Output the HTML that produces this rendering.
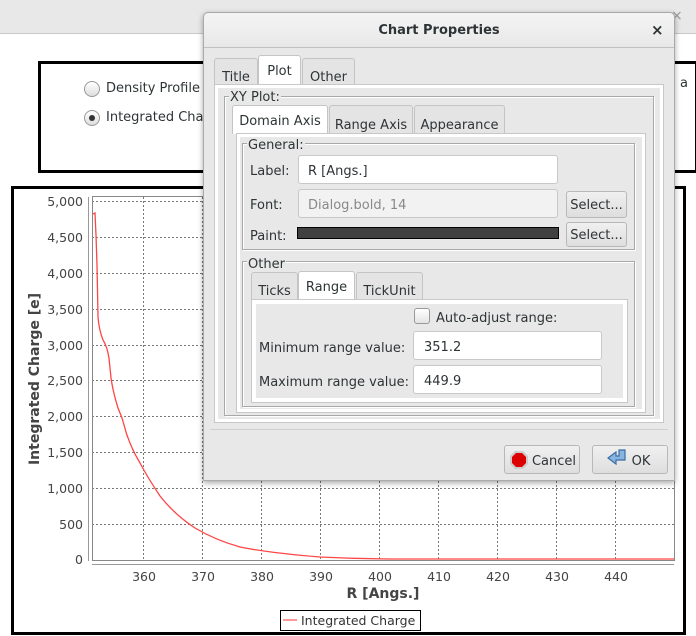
<!DOCTYPE html>
<html><head><meta charset="utf-8"><style>
*{box-sizing:border-box;margin:0;padding:0}
body{width:696px;height:636px;overflow:hidden;background:#fff;font-family:"DejaVu Sans","Liberation Sans",sans-serif;font-size:13px;color:#2e3436;position:relative}
.a{position:absolute}
.tab{position:absolute;border:1px solid #c4c4c4;border-bottom:none;border-radius:3px 3px 0 0;background:#e4e4e4;text-align:center;padding-top:11px;font-size:13px}
.tab.s{background:#fff;padding-top:8px}
.grp{position:absolute;border:1px solid #a8a8a8;box-shadow:inset 1px 1px 0 #fff,1px 1px 0 #fff}
.lg{position:absolute;background:#e8e8e8;padding:0 1px;font-size:13px;line-height:14px}
.fld{position:absolute;background:#fff;border:1px solid #c8c8c8;border-radius:3px;padding-left:9px;line-height:31px}
.btn{position:absolute;border:1px solid #b8b8b8;border-radius:3px;background:linear-gradient(#f0f0f0,#dedede);text-align:center;font-size:13px}
</style></head><body>
<div class="a" style="left:0;top:0;width:696px;height:34px;background:#e8e8e8;border-bottom:1px solid #c8c8c8"></div>
<div class="a" style="left:671px;top:8px;color:#999;font-size:14px">×</div>
<div class="a" style="left:38px;top:61px;width:660px;height:112px;border:3px solid #000"></div>
<div class="a" style="left:84px;top:81px;width:16px;height:16px;border:1px solid #999;border-radius:50%;background:linear-gradient(#fff,#ddd)"></div>
<div class="a" style="left:106px;top:81px">Density Profile</div>
<div class="a" style="left:84px;top:110px;width:16px;height:16px;border:1px solid #999;border-radius:50%;background:linear-gradient(#fff,#ddd)"><div class="a" style="left:4px;top:4px;width:6px;height:6px;border-radius:50%;background:#333"></div></div>
<div class="a" style="left:106px;top:110px">Integrated Charge</div>
<div class="a" style="left:680px;top:76px">a</div>
<div class="a" style="left:11px;top:186px;width:675px;height:449px;border:3px solid #000"></div>
<svg class="a" style="left:0;top:0" width="696" height="636">
<g stroke="#777" stroke-dasharray="2,2" stroke-width="1">
<line x1="92" x2="674" y1="201.5" y2="201.5"/><line x1="92" x2="674" y1="237.5" y2="237.5"/><line x1="92" x2="674" y1="273.5" y2="273.5"/><line x1="92" x2="674" y1="309.5" y2="309.5"/><line x1="92" x2="674" y1="345.5" y2="345.5"/><line x1="92" x2="674" y1="380.5" y2="380.5"/><line x1="92" x2="674" y1="416.5" y2="416.5"/><line x1="92" x2="674" y1="452.5" y2="452.5"/><line x1="92" x2="674" y1="488.5" y2="488.5"/><line x1="92" x2="674" y1="524.5" y2="524.5"/>
<line y1="197" y2="560" x1="143.5" x2="143.5"/><line y1="197" y2="560" x1="202.5" x2="202.5"/><line y1="197" y2="560" x1="261.5" x2="261.5"/><line y1="197" y2="560" x1="320.5" x2="320.5"/><line y1="197" y2="560" x1="379.5" x2="379.5"/><line y1="197" y2="560" x1="438.5" x2="438.5"/><line y1="197" y2="560" x1="497.5" x2="497.5"/><line y1="197" y2="560" x1="556.5" x2="556.5"/><line y1="197" y2="560" x1="615.5" x2="615.5"/>
</g>
<rect x="92.5" y="196.5" width="582" height="364" fill="none" stroke="#888"/>
<line x1="88.5" y1="197" x2="88.5" y2="561" stroke="#999"/>
<line x1="92" y1="564.5" x2="674" y2="564.5" stroke="#999"/>
<path fill="none" stroke="#f44" stroke-width="1.3" d="M93,214 L95,213 L96,235 L97,265 L98,317 Q99,330 103,340 Q107,346 109,358 L111,378 Q113,392 118,408 L122,418 L126,432 Q131,448 140,463 Q148,478 160,496 Q175,515 195,528 Q215,540 240,547 Q270,553 320,557 Q360,559 400,559 L674,559"/>
<g font-size="12.5" fill="#444" text-anchor="end" font-family="DejaVu Sans,sans-serif">
<text x="83" y="206">5,000</text><text x="83" y="242">4,500</text><text x="83" y="278">4,000</text><text x="83" y="314">3,500</text><text x="83" y="350">3,000</text><text x="83" y="385">2,500</text><text x="83" y="421">2,000</text><text x="83" y="457">1,500</text><text x="83" y="493">1,000</text><text x="83" y="529">500</text><text x="83" y="564">0</text>
</g>
<g font-size="12.5" fill="#444" text-anchor="middle">
<text x="144" y="581">360</text><text x="203" y="581">370</text><text x="262" y="581">380</text><text x="321" y="581">390</text><text x="380" y="581">400</text><text x="439" y="581">410</text><text x="498" y="581">420</text><text x="557" y="581">430</text><text x="616" y="581">440</text>
</g>
<text x="383" y="598" font-size="14" font-weight="bold" fill="#444" text-anchor="middle">R [Angs.]</text>
<text transform="translate(39,379) rotate(-90)" font-size="14" font-weight="bold" fill="#444" text-anchor="middle">Integrated Charge [e]</text>
<rect x="280.5" y="610.5" width="140" height="20" fill="#fff" stroke="#000"/>
<line x1="283" y1="620" x2="297" y2="620" stroke="#f99" stroke-width="2"/>
<text x="301" y="625" font-size="12.5" fill="#333">Integrated Charge</text>
</svg>

<!-- dialog -->
<div class="a" style="left:203px;top:12px;width:472px;height:469px;background:#e8e8e8;border:1px solid #aaa;border-radius:5px 5px 0 0;box-shadow:0 2px 6px rgba(0,0,0,.35)"></div>
<div class="a" style="left:204px;top:13px;width:470px;height:35px;background:linear-gradient(#f4f4f4,#e8e8e8);border-bottom:1px solid #c0c0c0;border-radius:5px 5px 0 0;text-align:center;line-height:36px;font-weight:bold;font-size:13px">Chart Properties</div>
<div class="a" style="left:651px;top:21px;font-weight:bold;font-size:15px">×</div>
<div class="tab" style="left:214px;top:58px;width:44px;height:27px">Title</div>
<div class="tab s" style="left:258px;top:55px;width:43px;height:30px">Plot</div>
<div class="tab" style="left:302px;top:58px;width:53px;height:27px">Other</div>
<div class="a" style="left:214px;top:84px;width:450px;height:339px;border:1px solid #c8c8c8;background:#e8e8e8;box-shadow:inset 0 0 0 3px #fff"></div>
<div class="grp" style="left:224px;top:96px;width:430px;height:320px"></div>
<div class="lg" style="left:229px;top:91px">XY Plot:</div>
<div class="tab s" style="left:232px;top:105px;width:96px;height:29px">Domain Axis</div>
<div class="tab" style="left:329px;top:105px;width:84px;height:28px;padding-top:12px">Range Axis</div>
<div class="tab" style="left:414px;top:105px;width:91px;height:28px;padding-top:12px">Appearance</div>
<div class="a" style="left:236px;top:133px;width:410px;height:280px;border:1px solid #c8c8c8;box-shadow:inset 0 0 0 3px #fff"></div>
<div class="grp" style="left:242px;top:143px;width:393px;height:107px"></div>
<div class="lg" style="left:247px;top:139px">General:</div>
<div class="a" style="left:250px;top:164px">Label:</div>
<div class="fld" style="left:298px;top:155px;width:260px;height:29px">R [Angs.]</div>
<div class="a" style="left:250px;top:198px">Font:</div>
<div class="fld" style="left:298px;top:189px;width:260px;height:29px;background:#f2f2f2;color:#888">Dialog.bold, 14</div>
<div class="btn" style="left:566px;top:191px;width:61px;height:27px;line-height:28px">Select...</div>
<div class="a" style="left:250px;top:229px">Paint:</div>
<div class="a" style="left:297px;top:227px;width:262px;height:12px;background:#404040;border:1px solid #000"></div>
<div class="btn" style="left:566px;top:222px;width:61px;height:25px;line-height:26px">Select...</div>
<div class="grp" style="left:242px;top:261px;width:393px;height:146px"></div>
<div class="lg" style="left:247px;top:258px">Other</div>
<div class="tab" style="left:251px;top:272px;width:47px;height:27px">Ticks</div>
<div class="tab s" style="left:298px;top:271px;width:57px;height:29px">Range</div>
<div class="tab" style="left:356px;top:272px;width:67px;height:27px">TickUnit</div>
<div class="a" style="left:251px;top:299px;width:377px;height:104px;border:1px solid #c8c8c8;box-shadow:inset 0 0 0 4px #fff"></div>
<div class="a" style="left:414px;top:308px;width:16px;height:16px;border:1px solid #999;border-radius:3px;background:linear-gradient(#fff,#e4e4e4)"></div>
<div class="a" style="left:436px;top:311px">Auto-adjust range:</div>
<div class="a" style="left:259px;top:341px">Minimum range value:</div>
<div class="fld" style="left:413px;top:331px;width:189px;height:29px;padding-left:10px">351.2</div>
<div class="a" style="left:259px;top:375px">Maximum range value:</div>
<div class="fld" style="left:413px;top:365px;width:189px;height:29px;padding-left:10px">449.9</div>
<div class="a" style="left:210px;top:429px;width:458px;height:1px;background:#d0d0d0"></div>
<div class="btn" style="left:504px;top:445px;width:76px;height:29px;line-height:31px;padding-left:24px">Cancel</div>
<svg class="a" style="left:509px;top:450px" width="20" height="20"><polygon points="6,1 14,1 19,6 19,14 14,19 6,19 1,14 1,6" fill="#ccc"/><polygon points="7,3 13,3 17,7 17,13 13,17 7,17 3,13 3,7" fill="#d00"/></svg>
<div class="btn" style="left:592px;top:445px;width:76px;height:29px;line-height:31px;padding-left:22px">OK</div>
<svg class="a" style="left:605px;top:448px" width="24" height="22"><path d="M14 2h6v10h-9v4l-8-6 8-6v4h3z" fill="#8ab4e0" stroke="#3a6ea5" stroke-width="1.2"/></svg>
</body></html>
